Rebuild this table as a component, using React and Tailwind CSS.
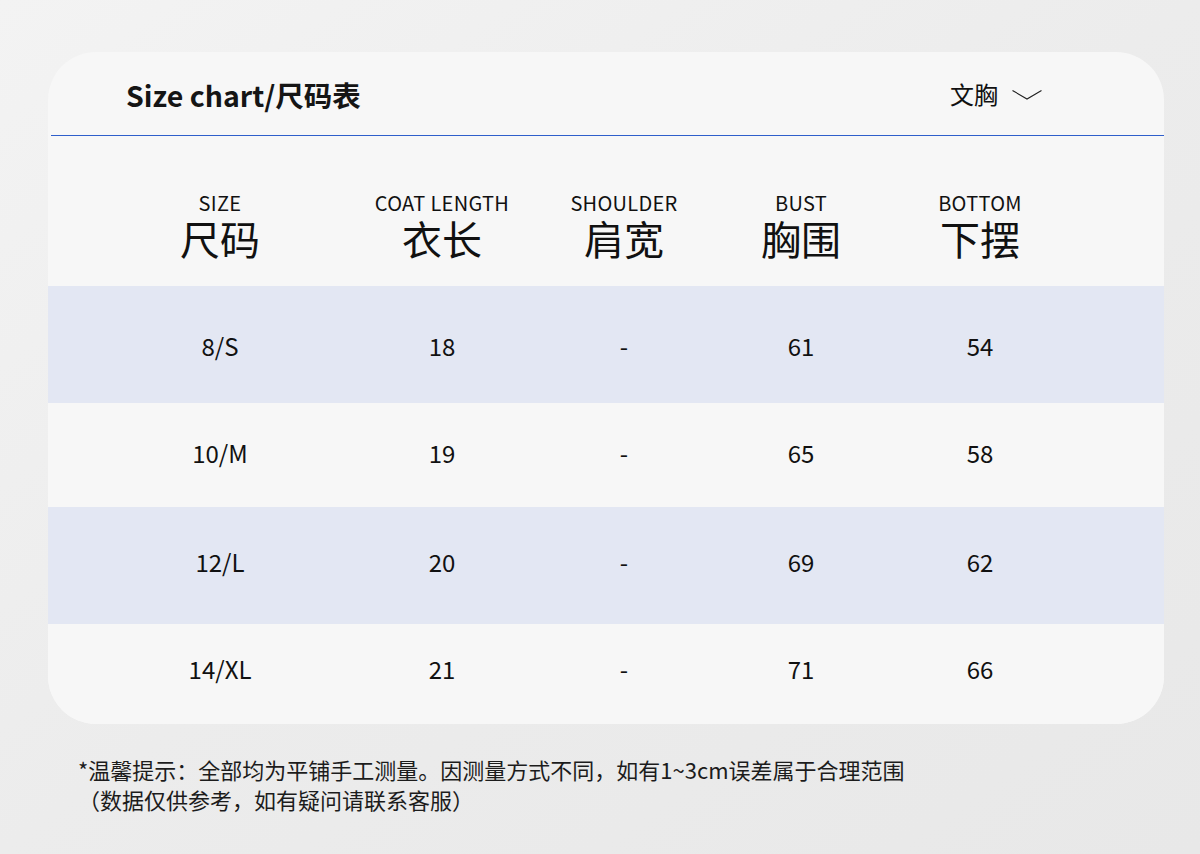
const columns = [
  { en: 'SIZE', zh: '尺码' },
  { en: 'COAT LENGTH', zh: '衣长' },
  { en: 'SHOULDER', zh: '肩宽' },
  { en: 'BUST', zh: '胸围' },
  { en: 'BOTTOM', zh: '下摆' },
];

const rows = [
  { cells: ['8/S', '18', '-', '61', '54'], h: 'h-[117px] pt-[2px]', bg: 'bg-[#e3e7f3]' },
  { cells: ['10/M', '19', '-', '65', '58'], h: 'h-[104px] pb-[4px]', bg: 'bg-[#f7f7f7]' },
  { cells: ['12/L', '20', '-', '69', '62'], h: 'h-[117px] pb-[7px]', bg: 'bg-[#e3e7f3]' },
  { cells: ['14/XL', '21', '-', '71', '66'], h: 'h-[100px] pb-[10px]', bg: 'bg-[#f7f7f7]' },
];

const gridCols = 'grid grid-cols-[220px_224px_140px_214px_144px] pl-[62px]';

const App = () => {
  return (
    <div className="min-h-[854px] w-[1200px] bg-gradient-to-br from-[#f3f3f3] via-[#ececec] to-[#e8e8e8] pt-[52px] font-['Noto_Sans_CJK_SC','Noto_Sans',sans-serif] text-[#111]">
      {/* Card */}
      <div className="ml-[48px] h-[672px] w-[1116px] overflow-hidden rounded-[48px] bg-[#f7f7f7]">
        <div className="flex h-[83px] items-center justify-between pl-[78px] pr-[122px] pt-[3px]">
          <h1 className="text-[28.5px] font-bold leading-none text-[#151515]">Size chart/尺码表</h1>
          <div className="-mt-[3px] flex items-center gap-[14px]">
            <span className="text-[24px] leading-none">文胸</span>
            <svg width="30" height="10" viewBox="0 0 30 10" className="mt-[2px]">
              <polyline points="0.5,0.5 15,9 29.5,0.5" fill="none" stroke="#222" strokeWidth="1.1" />
            </svg>
          </div>
        </div>
        <div className="ml-[3px] h-px bg-[#2f5fcb]" />

        {/* Column heads */}
        <div className={`${gridCols} h-[150px] pt-[56px]`}>
          {columns.map((c) => (
            <div key={c.en} className="flex flex-col items-center">
              <span className="text-[20px] leading-[22px] tracking-[0.3px]">{c.en}</span>
              <span className="mt-[4px] text-[40px] leading-[40px]">{c.zh}</span>
            </div>
          ))}
        </div>

        {rows.map((r, i) => (
          <div key={i} className={`${gridCols} ${r.h} ${r.bg} items-center`}>
            {r.cells.map((v, j) => (
              <span key={j} className="text-center text-[24px] leading-none">{v}</span>
            ))}
          </div>
        ))}
      </div>

      {/* Note */}
      <div className="pl-[78px] pt-[30px] text-[22px] leading-[30px] text-[#1c1c1c]">
        <p>*温馨提示：全部均为平铺手工测量。因测量方式不同，如有1~3cm误差属于合理范围</p>
        <p>（数据仅供参考，如有疑问请联系客服）</p>
      </div>
    </div>
  );
};

export default App;
